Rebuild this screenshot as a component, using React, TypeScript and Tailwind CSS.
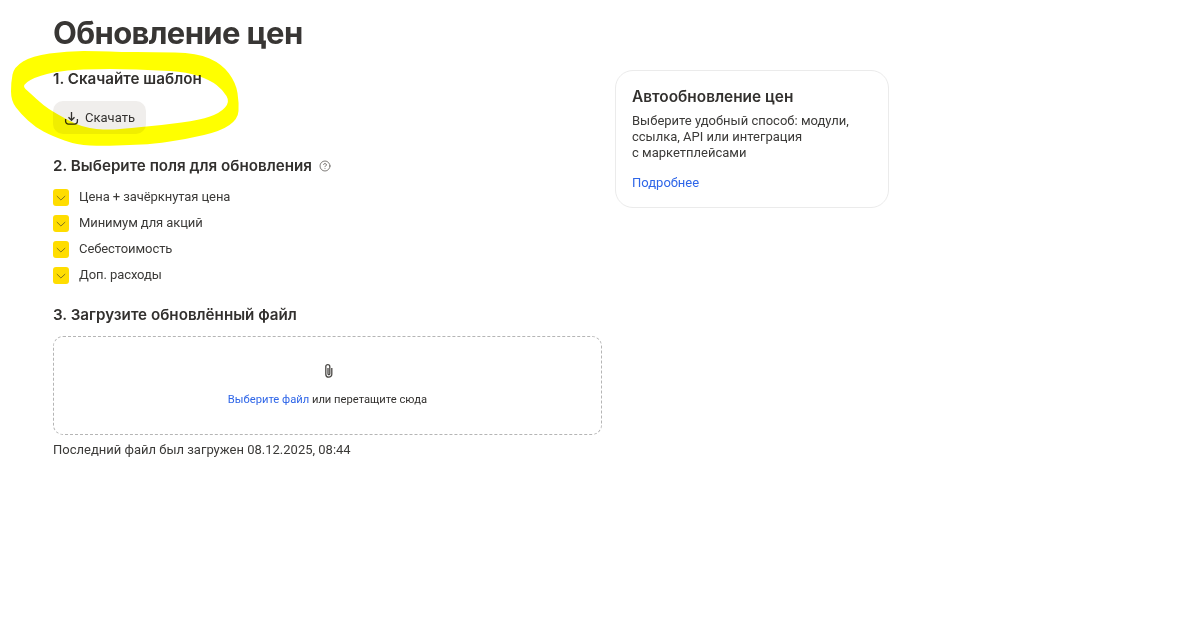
import { CircleHelp } from "lucide-react";

const fields = ["Цена + зачёркнутая цена", "Минимум для акций", "Себестоимость", "Доп. расходы"];

// outline of the marker stroke, traced from the screenshot
const outer = [
  [120, 52], [153, 52], [197, 53], [222, 64], [236, 83], [239, 103], [238, 119], [221, 131], [187, 139], [153, 144],
  [130, 145], [103, 146], [77, 145], [52, 136], [35, 127], [21, 114], [11, 101], [11, 82], [14, 67], [32, 56], [67, 51], [100, 51],
];
const inner = [
  [120, 69], [153, 70], [187, 72], [210, 80], [223, 90], [230, 102], [220, 113], [200, 120], [163, 125], [130, 128],
  [110, 130], [83, 128], [55, 113], [43, 105], [30, 93], [21, 85], [40, 75], [67, 70], [100, 69],
];

function smooth(pts: number[][]) {
  const mid = (a: number[], b: number[]) => [(a[0] + b[0]) / 2, (a[1] + b[1]) / 2];
  const start = mid(pts[pts.length - 1], pts[0]);
  let d = `M${start[0]} ${start[1]}`;
  pts.forEach((p, i) => {
    const m = mid(p, pts[(i + 1) % pts.length]);
    d += ` Q${p[0]} ${p[1]} ${m[0]} ${m[1]}`;
  });
  return d + " Z";
}

function Field({ label }: { label: string }) {
  return (
    <label className="flex items-center h-[26px]">
      <span className="w-4 h-[17px] rounded-[3px] bg-[#ffdd00] flex items-center justify-center">
        <svg width="16" height="17" viewBox="0 0 16 17" fill="none" stroke="#85761a" strokeWidth="1">
          <path d="M3.8 7 7.9 11 12.2 7" />
        </svg>
      </span>
      <span className="ml-[10px] text-[13px] tracking-[-0.08px] text-[#3b3a38] font-['Roboto',sans-serif]">{label}</span>
    </label>
  );
}

export default function App() {
  return (
    <div className="relative w-[1200px] h-[638px] bg-white overflow-hidden font-['Inter','Noto_Sans',sans-serif] text-[#32302e]">
      <div className="pl-[53px] pt-[12px]">
        <h1 className="text-[31px] leading-[42px] font-bold tracking-[-0.65px] text-[#383634]">Обновление цен</h1>
        <div className="flex gap-[13px]">
          <div className="w-[549px] flex flex-col">
            <h2 className="mt-[15px] text-[15.2px] leading-5 font-semibold">1. Скачайте шаблон</h2>
            <button className="mt-[12px] w-[93px] h-[33px] rounded-[10px] bg-[#f0eeec] flex items-center justify-center gap-[6px] text-[13px] font-['Roboto',sans-serif]">
              <svg width="15" height="16" viewBox="0 0 16 16" fill="none" stroke="#32302e" strokeWidth="1.4">
                <path d="M8 1.5v8.5M4.8 7.2 8 10.4l3.2-3.2" />
                <path d="M1.7 9v2.5a3 3 0 0 0 3 3h6.6a3 3 0 0 0 3-3V9" />
              </svg>
              Скачать
            </button>
            <div className="mt-[22px] flex items-center gap-[7px]">
              <h2 className="text-[15.2px] leading-5 font-semibold">2. Выберите поля для обновления</h2>
              <CircleHelp size={12} strokeWidth={1.5} className="text-[#55524e]" />
            </div>
            <div className="mt-[8px] flex flex-col">
              {fields.map((f) => (
                <Field key={f} label={f} />
              ))}
            </div>
            <h2 className="mt-[17px] text-[15.2px] leading-5 font-semibold">3. Загрузите обновлённый файл</h2>
            <div className="mt-[11px] h-[99px] rounded-[10px] border border-dashed border-[#b5b5b5] flex flex-col items-center justify-center">
              <svg width="12" height="15" viewBox="0 0 12 15" fill="none" stroke="#4a4845" strokeWidth="1.3">
                <path d="M9.8 5v6.2a3 3 0 0 1-6 0V3.6a2 2 0 0 1 4 0v7.2a.9.9 0 0 1-1.8 0V5" />
              </svg>
              <p className="mt-[14px] text-[11.2px] leading-4 font-['Roboto',sans-serif]">
                <span className="text-[#2f66e8]">Выберите файл</span> или перетащите сюда
              </p>
            </div>
            <p className="mt-[6px] text-[13px] leading-[18px] text-[#3b3a38] font-['Roboto',sans-serif]">Последний файл был загружен 08.12.2025, 08:44</p>
          </div>
          <div className="mt-[16px] w-[274px] h-[138px] rounded-[18px] border border-[#ebebeb] px-4 pt-[16px]">
            <h3 className="text-[15.4px] leading-5 font-semibold">Автообновление цен</h3>
            <p className="mt-[6px] text-[13px] leading-[16px] text-[#3b3a38] font-['Roboto',sans-serif]">
              Выберите удобный способ: модули,
              <br />
              ссылка, API или интеграция
              <br />с маркетплейсами
            </p>
            <p className="mt-[14px] text-[13px] leading-4 text-[#2f66e8] font-['Roboto',sans-serif]">Подробнее</p>
          </div>
        </div>
      </div>
      <svg className="absolute left-0 top-0 pointer-events-none mix-blend-multiply" width="1200" height="638">
        <path d={`${smooth(outer)} ${smooth(inner)}`} fill="#ffff00" fillRule="evenodd" />
      </svg>
    </div>
  );
}
